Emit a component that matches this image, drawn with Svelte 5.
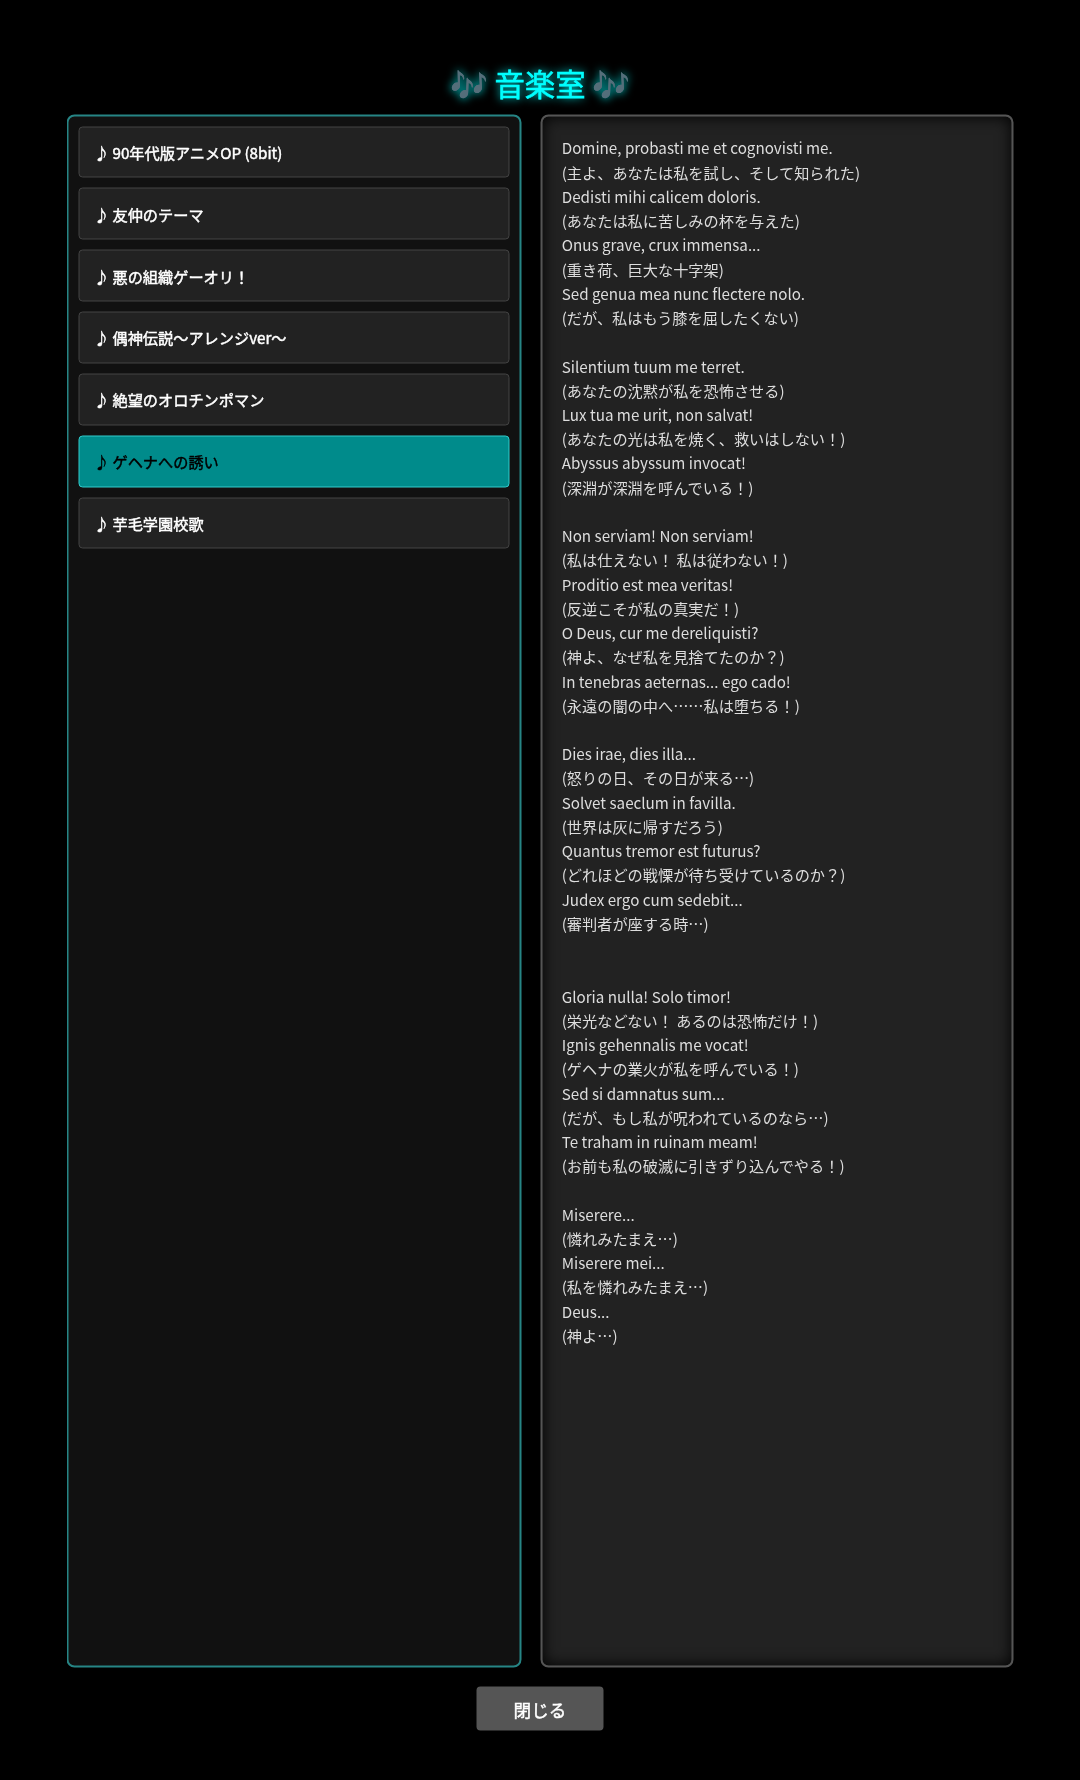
<script>
  const tracks = ['90年代版アニメOP (8bit)', '友仲のテーマ', '悪の組織ゲーオリ！', '偶神伝説〜アレンジver〜', '絶望のオロチンポマン', 'ゲヘナへの誘い', '芋毛学園校歌'];
  const selected = 5;
  const lyrics = `Domine, probasti me et cognovisti me.
(主よ、あなたは私を試し、そして知られた)
Dedisti mihi calicem doloris.
(あなたは私に苦しみの杯を与えた)
Onus grave, crux immensa...
(重き荷、巨大な十字架)
Sed genua mea nunc flectere nolo.
(だが、私はもう膝を屈したくない)

Silentium tuum me terret.
(あなたの沈黙が私を恐怖させる)
Lux tua me urit, non salvat!
(あなたの光は私を焼く、救いはしない！)
Abyssus abyssum invocat!
(深淵が深淵を呼んでいる！)

Non serviam! Non serviam!
(私は仕えない！ 私は従わない！)
Proditio est mea veritas!
(反逆こそが私の真実だ！)
O Deus, cur me dereliquisti?
(神よ、なぜ私を見捨てたのか？)
In tenebras aeternas... ego cado!
(永遠の闇の中へ……私は堕ちる！)

Dies irae, dies illa...
(怒りの日、その日が来る…)
Solvet saeclum in favilla.
(世界は灰に帰すだろう)
Quantus tremor est futurus?
(どれほどの戦慄が待ち受けているのか？)
Judex ergo cum sedebit...
(審判者が座する時…)


Gloria nulla! Solo timor!
(栄光などない！ あるのは恐怖だけ！)
Ignis gehennalis me vocat!
(ゲヘナの業火が私を呼んでいる！)
Sed si damnatus sum...
(だが、もし私が呪われているのなら…)
Te traham in ruinam meam!
(お前も私の破滅に引きずり込んでやる！)

Miserere...
(憐れみたまえ…)
Miserere mei...
(私を憐れみたまえ…)
Deus...
(神よ…)`;
</script>

<div class="page">
  <div class="modal">
    <h1 class="title">🎶 音楽室 🎶</h1>
    <div class="panels">
      <div class="list">
        {#each tracks as t, i}
          <div class="track" class:active={i === selected}>♪ {t}</div>
        {/each}
      </div>
      <div class="lyrics">{lyrics}</div>
    </div>
    <button class="close">閉じる</button>
  </div>
</div>

<style>
  :global(body) { margin: 0; background: #000; }
  .page {
    box-sizing: border-box;
    width: 1080px;
    height: 1780px;
    padding: 61px 67px 50px 66px;
    display: flex;
    background: #000;
  }
  .modal {
    flex: 1;
    min-width: 0;
    display: flex;
    flex-direction: column;
    align-items: center;
    font-family: "Noto Sans CJK JP", "Noto Sans", sans-serif;
    will-change: transform;
    transform: translate(0.5px, 0.5px);
  }
  .title {
    margin: 0 0 11px;
    font-size: 30.4px;
    line-height: 42px;
    font-weight: 400;
    -webkit-text-stroke: 0.6px #0ff;
    color: #0ff;
    text-shadow: 0 0 10px #0ff;
  }
  .panels {
    flex: 1;
    min-height: 0;
    width: 100%;
    display: flex;
    gap: 19px;
  }
  .list {
    box-sizing: border-box;
    width: 455px;
    padding: 9.5px 10px 10px;
    background: #111;
    border: 2px solid #268585;
    border-radius: 8px;
    display: flex;
    flex-direction: column;
    gap: 10px;
  }
  .track {
    box-sizing: border-box;
    height: 51.85px;
    padding: 0 14.4px 1px;
    display: flex;
    align-items: center;
    white-space: pre;
    background: #222;
    border: 1px solid #444;
    border-radius: 4px;
    color: #fff;
    font-size: 15.2px;
    font-weight: 400;
    -webkit-text-stroke: 0.45px #fff;
  }
  .track.active {
    background: #008b8b;
    border-color: #3cc;
    color: #000;
    -webkit-text-stroke: 0.45px #000;
  }
  .lyrics {
    box-sizing: border-box;
    flex: 1;
    padding: 18.4px 19.2px 19.2px;
    background: #222;
    border: 2px solid #555;
    border-radius: 8px;
    box-shadow: inset 0 0 15px #000;
    color: #ddd;
    font-size: 15.2px;
    line-height: 24.24px;
    white-space: pre-wrap;
  }
  .close {
    margin-top: 19px;
    width: 127px;
    height: 44px;
    border: 0;
    border-radius: 4px;
    background: #555;
    color: #fff;
    font: 400 17.6px "Noto Sans CJK JP", sans-serif;
    -webkit-text-stroke: 0.45px #fff;
  }
</style>
